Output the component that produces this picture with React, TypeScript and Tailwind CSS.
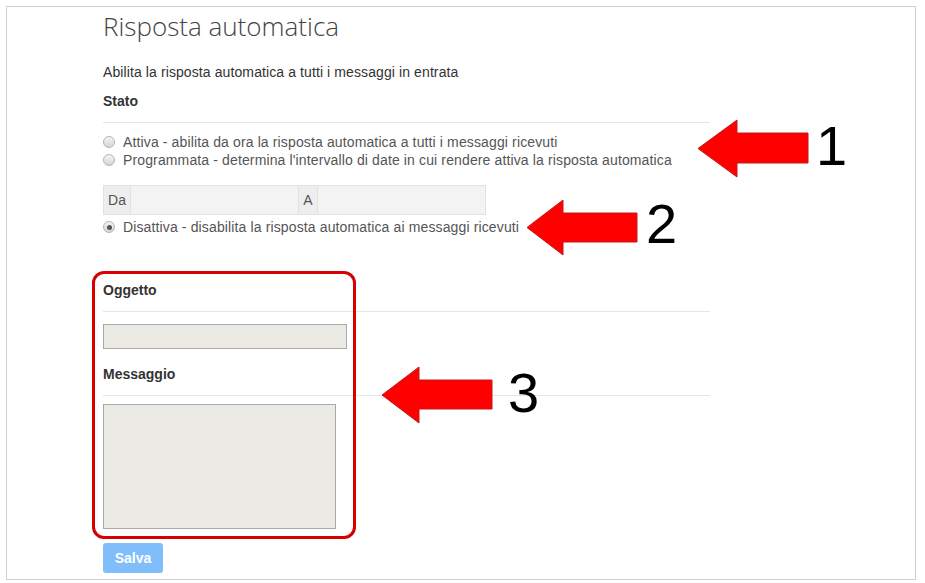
import React from "react";

const sans = "font-['Liberation_Sans',Arial,sans-serif]";

function Radio({ checked = false }: { checked?: boolean }) {
  return (
    <span className="flex h-[12px] w-[12px] shrink-0 items-center justify-center rounded-full border border-[#b4b4b4] bg-linear-to-b from-[#f4f4f4] to-[#d6d6d6]">
      {checked && <span className="h-[5px] w-[5px] rounded-full bg-[#555]" />}
    </span>
  );
}

function Option({ label, checked }: { label: string; checked?: boolean }) {
  return (
    <label className="flex h-[18px] items-center gap-[8px] text-[14px] leading-[18px] tracking-[0.13px] text-[#555]">
      <Radio checked={checked} />
      <span>{label}</span>
    </label>
  );
}

// red annotation arrow, tip on the left
function Arrow({ left, top, w, h, head, sTop, sBot }: { left: number; top: number; w: number; h: number; head: number; sTop: number; sBot: number }) {
  const mid = h / 2;
  return (
    <svg
      className="absolute"
      style={{ left, top }}
      width={w}
      height={h}
      viewBox={`0 0 ${w} ${h}`}
    >
      <polygon
        points={`1,${mid} ${head},1 ${head},${sTop} ${w - 1},${sTop} ${w - 1},${sBot} ${head},${sBot} ${head},${h - 1}`}
        fill="#ff0000"
        stroke="#c21a1a"
        strokeWidth="1"
      />
    </svg>
  );
}

function Num({ n, left, top }: { n: string; left: number; top: number }) {
  return (
    <span
      className={`absolute text-[56px] leading-none text-black ${sans}`}
      style={{ left, top }}
    >
      {n}
    </span>
  );
}

export default function App() {
  return (
    <div className={`relative h-[583px] w-[925px] overflow-hidden bg-white ${sans}`}>
      <div className="absolute left-[6px] top-[6px] h-[574px] w-[910px] border border-[#cfcfcf]" />

      <div className="relative w-[607px] pl-[103px] pt-[11px] box-content">
        <h1 className="font-['Open_Sans',sans-serif] text-[26px] font-light leading-[30px] text-[#444]">
          Risposta automatica
        </h1>

        <p className="mt-[22px] text-[14px] leading-[18px] tracking-[0.1px] text-[#333]">
          Abilita la risposta automatica a tutti i messaggi in entrata
        </p>

        <div className="mt-[11px] border-b border-[#e5e5e5] pb-[12px]">
          <h4 className="text-[14px] font-bold leading-[18px] text-[#333]">Stato</h4>
        </div>

        <div className="mt-[10px] flex flex-col">
          <Option label="Attiva - abilita da ora la risposta automatica a tutti i messaggi ricevuti" />
          <Option label="Programmata - determina l'intervallo di date in cui rendere attiva la risposta automatica" />
        </div>

        <div className="mt-[16px] flex h-[30px] w-[383px] text-[14px] text-[#555]">
          <span className="flex w-[28px] items-center justify-center border border-[#e2e2e2] bg-[#eeeeee]">Da</span>
          <input className="w-[167px] border-y border-[#e2e2e2] bg-[#f3f3f3] outline-none" disabled />
          <span className="flex w-[20px] items-center justify-center border border-[#e2e2e2] bg-[#eeeeee]">A</span>
          <input className="w-[168px] border-y border-r border-[#e2e2e2] bg-[#f3f3f3] outline-none" disabled />
        </div>

        <div className="mt-[3px]">
          <Option label="Disattiva - disabilita la risposta automatica ai messaggi ricevuti" checked />
        </div>

        <div className="mt-[45px] border-b border-[#e5e5e5] pb-[12px]">
          <h4 className="text-[14px] font-bold leading-[18px] text-[#333]">Oggetto</h4>
        </div>

        <input className="mt-[12px] block h-[25px] w-[244px] border border-[#a9a9a9] bg-[#ebeae5] outline-none" disabled />

        <div className="mt-[16px] border-b border-[#e5e5e5] pb-[12px]">
          <h4 className="text-[14px] font-bold leading-[18px] text-[#333]">Messaggio</h4>
        </div>

        <textarea className="mt-[8px] block h-[125px] w-[233px] resize-none border border-[#a9a9a9] bg-[#ebeae5] outline-none" disabled />

        <button className="mt-[14px] flex h-[30px] w-[60px] items-center justify-center rounded-[3px] bg-[#80bdfb] text-[14px] font-bold text-white">
          Salva
        </button>
      </div>

      {/* annotations */}
      <div className="absolute left-[92px] top-[271px] h-[268px] w-[264px] rounded-[12px] border-[3px] border-[#d70000]" />

      <Arrow left={697} top={119} w={112} h={59} head={40} sTop={14} sBot={44} />
      <Num n="1" left={816} top={118} />

      <Arrow left={526} top={199} w={112} h={57} head={37} sTop={14} sBot={43} />
      <Num n="2" left={646} top={196} />

      <Arrow left={381} top={366} w={112} h={58} head={38} sTop={14} sBot={43} />
      <Num n="3" left={508} top={365} />
    </div>
  );
}
